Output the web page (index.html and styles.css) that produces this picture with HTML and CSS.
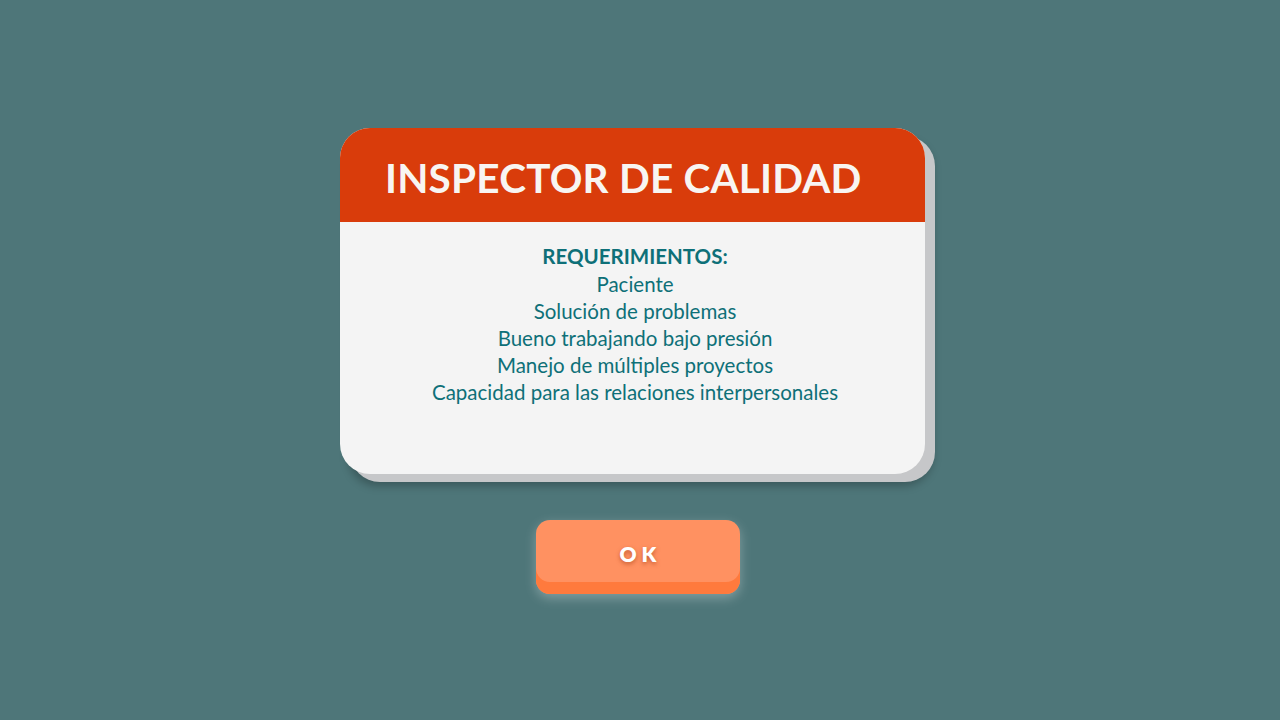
FILE: index.html
```html
<!DOCTYPE html>
<html lang="es">
<head>
<meta charset="utf-8">
<title>Inspector de calidad</title>
<link rel="stylesheet" href="styles.css">
</head>
<body>
<main class="stage">
  <section class="card">
    <header class="card-head">
      <h1 class="card-title">INSPECTOR DE CALIDAD</h1>
    </header>
    <div class="card-body">
      <h2 class="req-title">REQUERIMIENTOS:</h2>
      <ul class="req-list">
        <li>Paciente</li>
        <li>Solución de problemas</li>
        <li>Bueno trabajando bajo presión</li>
        <li>Manejo de múltiples proyectos</li>
        <li>Capacidad para las relaciones interpersonales</li>
      </ul>
    </div>
  </section>
  <button class="ok-btn" type="button">OK</button>
</main>
</body>
</html>
```
FILE: styles.css
```css
html, body {
  margin: 0;
  padding: 0;
}
body {
  background: #4e7679;
  font-family: "Lato", "Noto Sans", "DejaVu Sans", sans-serif;
}
.stage {
  height: 720px;
  display: flex;
  flex-direction: column;
  align-items: center;
  justify-content: center;
  gap: 46px;
  padding-top: 2px;
  box-sizing: border-box;
}
.card {
  width: 585px;
  height: 346px;
  margin-right: 15px;
  background: #f4f4f4;
  border-radius: 30px;
  overflow: hidden;
  box-shadow: 10px 8px 0 #c6c7c9, 8px 12px 8px rgba(0, 0, 0, 0.25);
  display: flex;
  flex-direction: column;
}
.card-head {
  height: 94px;
  background: #d93c0b;
  display: flex;
  align-items: center;
  padding-left: 45px;
  padding-top: 4px;
  box-sizing: border-box;
  flex-shrink: 0;
}
.card-title {
  margin: 0;
  color: #f8f5f2;
  font-size: 40.5px;
  font-weight: 700;
  letter-spacing: 0.2px;
}
.card-body {
  padding-top: 19px;
  padding-left: 5px;
  text-align: center;
  color: #0e7078;
}
.req-title {
  margin: 0;
  font-size: 20.5px;
  font-weight: 700;
  line-height: 30px;
}
.req-list {
  list-style: none;
  margin: 0;
  padding: 0;
  font-size: 20.5px;
  line-height: 27px;
}
.ok-btn {
  width: 204px;
  height: 74px;
  margin-right: 4px;
  border: none;
  border-radius: 14px;
  background: #ff9161;
  box-shadow: inset 0 -12px 0 #ff7a3d, 0 4px 12px rgba(255, 255, 255, 0.3);
  color: #ffffff;
  font-family: "Lato", "Noto Sans", sans-serif;
  font-weight: 800;
  font-size: 21px;
  letter-spacing: 5px;
  padding: 0 0 8px 5px;
  text-shadow: 0 2px 4px rgba(160, 60, 20, 0.6);
  cursor: pointer;
}
```
